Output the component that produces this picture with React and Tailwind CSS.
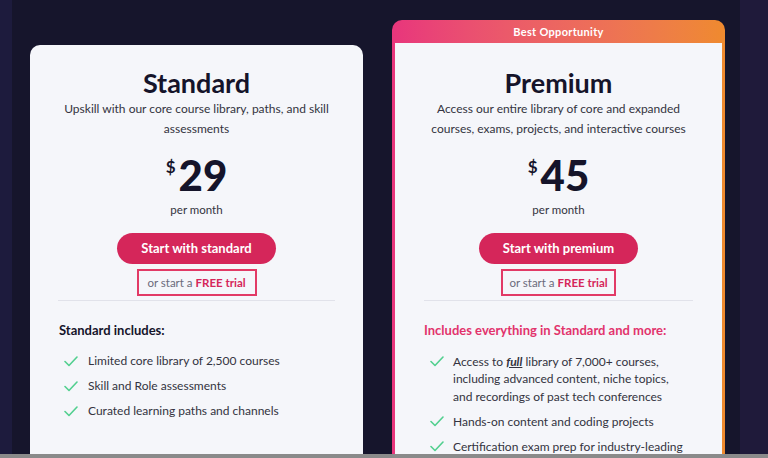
import React from "react";

const Check = () => (
  <svg width="14" height="11" viewBox="0 0 14 11" fill="none" className="shrink-0 mt-[3px]">
    <path d="M1 5.5 L5 9.5 L13 1" stroke="#52cf8f" strokeWidth="1.6" strokeLinecap="round" strokeLinejoin="round" />
  </svg>
);

const font = { fontFamily: "Lato, 'Noto Sans', sans-serif" };

function Price({ amount }) {
  return (
    <div className="flex justify-center items-start mt-[15px] text-[#15142a]">
      <span className="text-[17px] font-bold leading-none mt-[4px] mr-[3px]">$</span>
      <span className="text-[42px] font-black leading-none">{amount}</span>
    </div>
  );
}

function Trial({ w }) {
  return (
    <div className="flex justify-center mt-[5px]">
      <div className={`border-2 border-[#e23a66] h-[27px] flex items-center justify-center ${w} text-[11.5px]`}>
        <span className="text-[#6b6b7a]">or start a&nbsp;</span>
        <span className="text-[#d5265a] font-bold">FREE trial</span>
      </div>
    </div>
  );
}

export default function App() {
  return (
    <div className="w-[768px] h-[458px] flex flex-col bg-[#16152c] overflow-hidden" style={font}>
      <div className="flex-1 flex overflow-hidden">
        <div className="w-[12px] bg-[#1d1b3d] shrink-0" />
        <div className="flex-1 flex items-start pl-[18px] gap-[29px] overflow-hidden">
          {/* Standard */}
          <div className="mt-[45px] w-[333px] h-[420px] shrink-0 bg-[#f5f6fa] rounded-[10px] px-[28px]">
            <h2 className="text-center text-[27px] font-bold text-[#15142a] mt-[22px] leading-[32px]">Standard</h2>
            <p className="text-center text-[12px] leading-[20px] text-[#333340] mt-0">
              Upskill with our core course library, paths, and skill assessments
            </p>
            <Price amount="29" />
            <div className="text-center text-[11.5px] text-[#333340] mt-[5px]">per month</div>
            <div className="flex justify-center mt-[15px]">
              <div className="w-[159px] h-[31px] rounded-full bg-[#d5265a] text-white text-[13px] font-bold flex items-center justify-center">
                Start with standard
              </div>
            </div>
            <Trial w="w-[120px]" />
            <div className="h-px bg-[#e1e2ea] mt-[4px]" />
            <div className="mt-[20px] pl-[1px] text-[13px] font-bold text-[#15142a]">Standard includes:</div>
            <ul className="mt-[12px] flex flex-col gap-[9px] pl-[6px] text-[12px] text-[#333340]">
              {["Limited core library of 2,500 courses", "Skill and Role assessments", "Curated learning paths and channels"].map((t) => (
                <li key={t} className="flex gap-[10px] leading-[16px]">
                  <Check />
                  <span>{t}</span>
                </li>
              ))}
            </ul>
          </div>
          {/* Premium */}
          <div className="mt-[20px] w-[333px] h-[460px] shrink-0 rounded-[10px] bg-gradient-to-r from-[#e8357c] to-[#ef8a2e] px-[3px] flex flex-col">
            <div className="h-[23px] shrink-0 pt-[2px] flex items-center justify-center text-white text-[11px] font-bold tracking-[0.3px]">
              Best Opportunity
            </div>
            <div className="flex-1 bg-[#f5f6fa] px-[29px]">
              <h2 className="text-center text-[27px] font-bold text-[#15142a] mt-[24px] leading-[32px]">Premium</h2>
              <p className="text-center text-[12px] leading-[20px] text-[#333340] mt-0">
                Access our entire library of core and expanded courses, exams, projects, and interactive courses
              </p>
              <Price amount="45" />
              <div className="text-center text-[11.5px] text-[#333340] mt-[5px]">per month</div>
              <div className="flex justify-center mt-[15px]">
                <div className="w-[159px] h-[31px] rounded-full bg-[#d5265a] text-white text-[13px] font-bold flex items-center justify-center">
                  Start with premium
                </div>
              </div>
              <Trial w="w-[115px]" />
              <div className="h-px bg-[#e1e2ea] mt-[4px]" />
              <div className="mt-[20px] text-[13px] font-bold text-[#e2336c]">Includes everything in Standard and more:</div>
              <ul className="mt-[12px] flex flex-col gap-[7.5px] pl-[6px] text-[12px] text-[#333340]">
                <li className="flex gap-[9px] leading-[17.5px] pr-[12px]">
                  <Check />
                  <span>
                    Access to <span className="font-bold italic underline">full</span> library of 7,000+ courses, including advanced content, niche topics, and recordings of past tech conferences
                  </span>
                </li>
                <li className="flex gap-[9px] leading-[17.5px]">
                  <Check />
                  <span>Hands-on content and coding projects</span>
                </li>
                <li className="flex gap-[9px] leading-[17.5px]">
                  <Check />
                  <span>Certification exam prep for industry-leading certifications</span>
                </li>
              </ul>
            </div>
          </div>
        </div>
        <div className="w-[28px] bg-[#1f1a3a] shrink-0" />
      </div>
      <div className="h-[4px] bg-[#8a8a8a] shrink-0" />
    </div>
  );
}
